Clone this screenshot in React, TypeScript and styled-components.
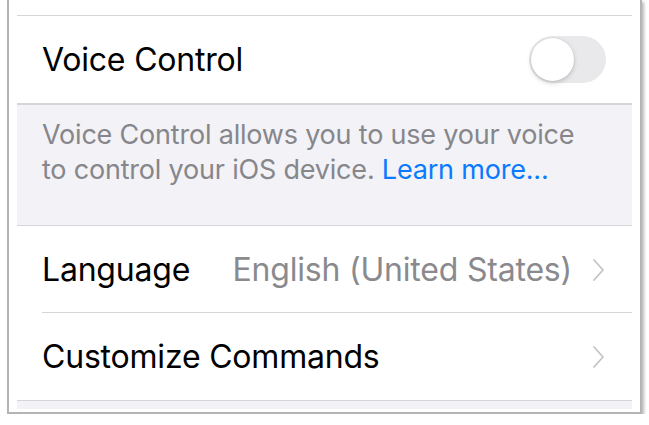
import React from "react";
import styled, { createGlobalStyle } from "styled-components";

const GlobalStyle = createGlobalStyle`
  html, body {
    margin: 0;
    padding: 0;
    background: #ffffff;
  }
  body {
    font-family: Inter, "Liberation Sans", Arial, sans-serif;
    -webkit-font-smoothing: antialiased;
  }
`;

const Frame = styled.div`
  box-sizing: border-box;
  margin-left: 7px;
  width: 635px;
  height: 414px;
  border: 2px solid #b4b4b4;
  border-top: none;
  box-shadow: 2px 2px 3px rgba(0, 0, 0, 0.28);
  background: #ffffff;
  padding: 15px 8px 0 8px;
`;

const Group = styled.div<{ $noTop?: boolean }>`
  border-top: ${(p) => (p.$noTop ? "none" : "1px solid #d6d6da")};
  border-bottom: 1px solid #d6d6da;
  background: #ffffff;
`;

const Row = styled.div<{ $inset?: boolean }>`
  display: flex;
  align-items: center;
  height: 87px;
  padding-left: 25px;
  padding-right: 27px;
  position: relative;
  ${(p) =>
    p.$inset &&
    `
    &::after {
      content: "";
      position: absolute;
      left: 25px;
      right: 0;
      bottom: 0;
      height: 1px;
      background: #d6d6da;
    }
  `}
`;

const Label = styled.span`
  font-size: 32px;
  color: #000000;
  letter-spacing: -0.2px;
  flex: 0 0 auto;
`;

const Value = styled.span`
  font-size: 32px;
  color: #8a8a8e;
  letter-spacing: -0.2px;
  margin-left: auto;
`;

const Chevron = styled.svg`
  width: 13px;
  height: 24px;
  margin-left: 20px;
  flex: 0 0 auto;
`;

const Spacer = styled.div`
  margin-left: auto;
`;

const Toggle = styled.div`
  margin-left: auto;
  margin-right: -1px;
  width: 77px;
  height: 47px;
  border-radius: 24px;
  background: #e9e9eb;
  position: relative;
`;

const Knob = styled.div`
  position: absolute;
  left: 2px;
  top: 2px;
  width: 43px;
  height: 43px;
  border-radius: 50%;
  background: #ffffff;
  box-shadow: 0 2px 5px rgba(0, 0, 0, 0.18), 0 0 0 0.5px rgba(0, 0, 0, 0.06);
`;

const Footer = styled.div`
  background: #f2f2f7;
  border-top: 1px solid #d6d6da;
  border-bottom: 1px solid #d6d6da;
  padding: 12px 42px 38px 25px;
  font-size: 27px;
  line-height: 35px;
  color: #86868b;
  letter-spacing: -0.2px;
`;

const Link = styled.span`
  color: #0a7aff;
`;

const BottomStrip = styled.div`
  height: 8px;
  background: #f2f2f7;
`;

const Arrow = () => (
  <Chevron viewBox="0 0 13 24">
    <path
      d="M2 2 L11 12 L2 22"
      fill="none"
      stroke="#c4c4c7"
      strokeWidth="1.8"
      strokeLinecap="round"
      strokeLinejoin="round"
    />
  </Chevron>
);

export default function App() {
  return (
    <>
      <GlobalStyle />
      <Frame>
        <Group>
          <Row>
            <Label>Voice Control</Label>
            <Toggle>
              <Knob />
            </Toggle>
          </Row>
        </Group>
        <Footer>
          Voice Control allows you to use your voice to control your iOS
          device. <Link>Learn more...</Link>
        </Footer>
        <Group $noTop>
          <Row $inset>
            <Label>Language</Label>
            <Value>English (United States)</Value>
            <Arrow />
          </Row>
          <Row>
            <Label>Customize Commands</Label>
            <Spacer />
            <Arrow />
          </Row>
        </Group>
        <BottomStrip />
      </Frame>
    </>
  );
}
